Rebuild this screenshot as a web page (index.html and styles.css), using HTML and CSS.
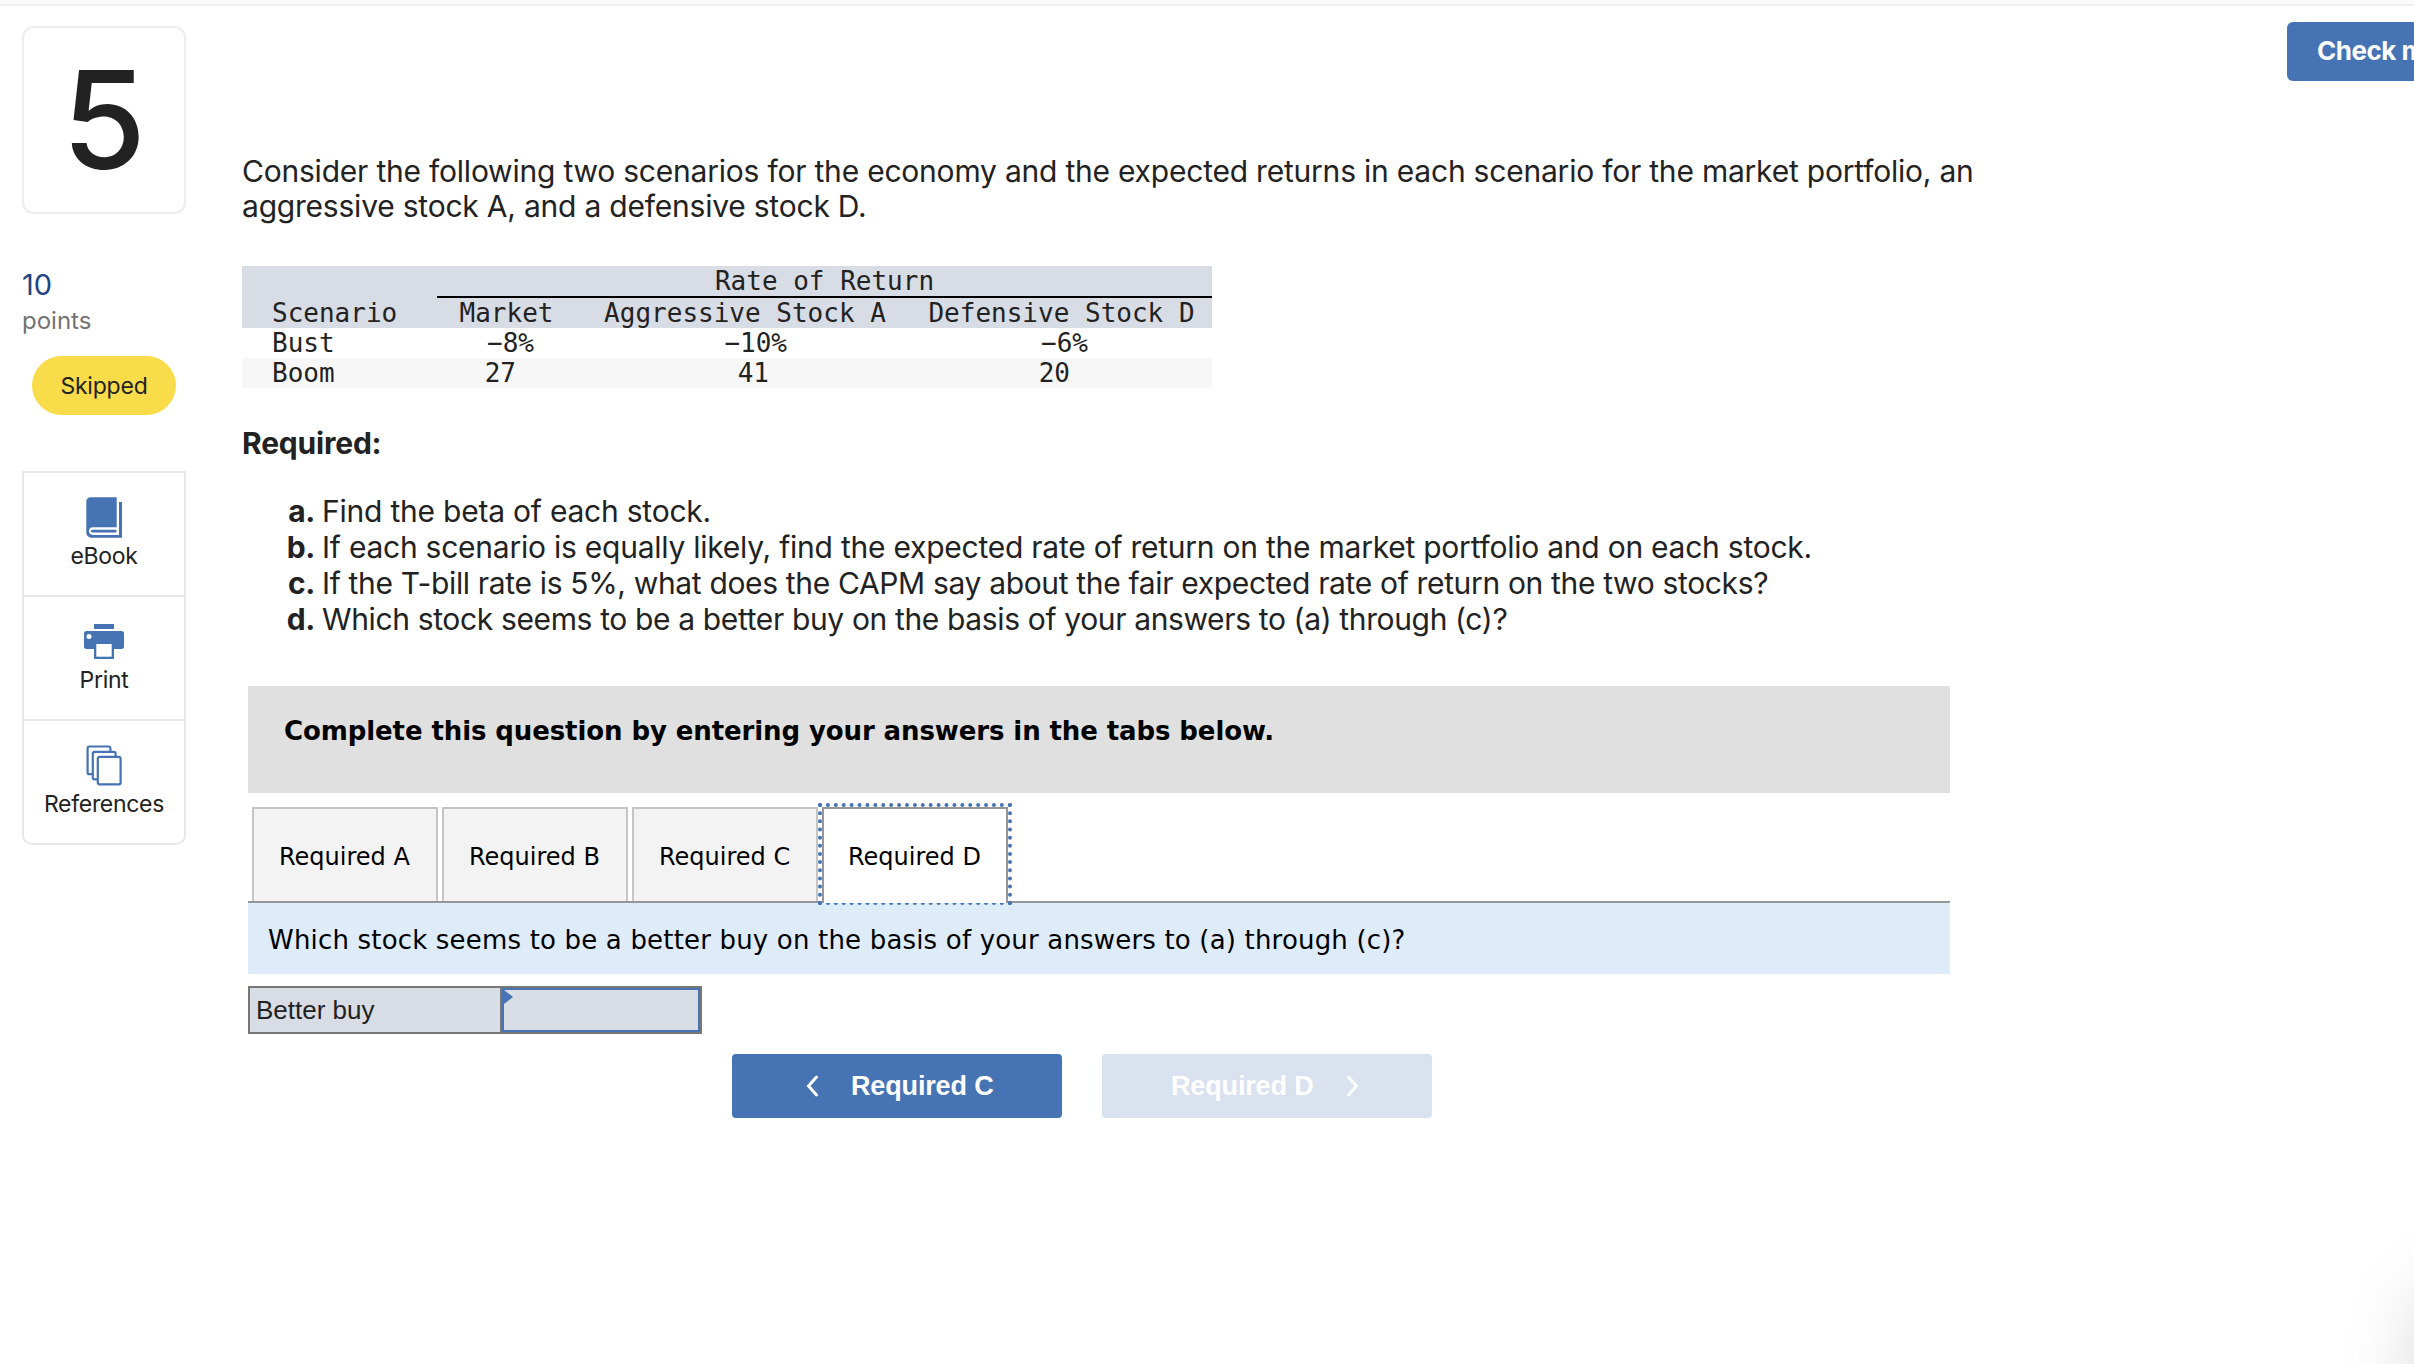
FILE: index.html
```html
<!DOCTYPE html>
<html lang="en">
    <head>
        <meta charset="utf-8">
        <title>Question 5</title>
        <link rel="stylesheet" href="styles.css">
    </head>
    <body>
        <div class="topbar"></div>
        <div class="page">
            <aside class="sidebar">
                <div class="number">5</div>
                <div class="score">10</div>
                <div class="points">points</div>
                <div class="status">Skipped</div>
                <div class="tools">
                    <a class="tool">
                        <svg width="42" height="42" viewBox="0 0 42 42">
                            <path fill="#4673b3" d="M7.5.3H33.7V30.3H9.8a3.8 3.8 0 0 0 0 7.6H36V5h3v35.7H8.3a5 5 0 0 1-5-5V4.5A4.2 4.2 0 0 1 7.5.3z"/>
                            <rect x="8" y="32.7" width="25.7" height="2.7" rx="1.3" fill="#4673b3"/>
                        </svg>
                        <span>eBook</span>
                    </a>
                    <a class="tool">
                        <svg width="42" height="42" viewBox="0 0 42 42">
                            <path fill="#4673b3" d="M11 3h20v5H11zM3.500 10h35a2.500 2.500 0 0 1 2.500 2.500v13a2.500 2.500 0 0 1-2.500 2.500H31v10H11V28H3.500A2.500 2.500 0 0 1 1 25.500v-13A2.500 2.500 0 0 1 3.500 10z"/>
                            <path fill="#fff" d="M13.300 23h15.400v12.700H13.300z"/>
                            <circle cx="6" cy="15.600" r="2.500" fill="#fff"/>
                        </svg>
                        <span>Print</span>
                    </a>
                    <a class="tool">
                        <svg width="42" height="42" viewBox="0 0 42 42">
                            <g fill="#fff" stroke="#4673b3" stroke-width="2.200">
                                <rect x="4.600" y="1.500" width="22.800" height="27.700" rx="1.800"/>
                                <rect x="9.800" y="6.800" width="22.800" height="27.500" rx="1.800"/>
                                <rect x="14.800" y="11.900" width="22.800" height="27.400" rx="1.800"/>
                            </g>
                        </svg>
                        <span>References</span>
                    </a>
                </div>
            </aside>

            <main class="question">
                <p class="intro">Consider the following two scenarios for the economy and the expected returns in each scenario for the market portfolio, an aggressive stock A, and a defensive stock D.</p>

                <table class="returns">
                    <colgroup>
                        <col class="col-scenario"><col class="col-market"><col class="col-a"><col class="col-d">
                    </colgroup>
                    <thead>
                        <tr><th></th><th class="span" colspan="3">Rate of Return</th></tr>
                        <tr><th class="name">Scenario</th><th>Market</th><th>Aggressive Stock A</th><th>Defensive Stock D</th></tr>
                    </thead>
                    <tbody>
                        <tr class="pct"><td class="name">Bust</td><td>−8%</td><td>−10%</td><td>−6%</td></tr>
                        <tr class="alt"><td class="name">Boom</td><td>27</td><td>41</td><td>20</td></tr>
                    </tbody>
                </table>

                <h2 class="required">Required:</h2>
                <ul class="parts">
                    <li><b>a.</b><span class="part-a">Find the beta of each stock.</span></li>
                    <li><b>b.</b><span class="part-b">If each scenario is equally likely, find the expected rate of return on the market portfolio and on each stock.</span></li>
                    <li><b>c.</b><span class="part-c">If the T-bill rate is 5%, what does the CAPM say about the fair expected rate of return on the two stocks?</span></li>
                    <li><b>d.</b><span class="part-d">Which stock seems to be a better buy on the basis of your answers to (a) through (c)?</span></li>
                </ul>

                <section class="worksheet">
                    <div class="directions">Complete this question by entering your answers in the tabs below.</div>
                    <div class="tabs">
                        <div class="tab">Required A</div>
                        <div class="tab">Required B</div>
                        <div class="tab">Required C</div>
                        <div class="tab active">Required D</div>
                    </div>
                    <div class="prompt">Which stock seems to be a better buy on the basis of your answers to (a) through (c)?</div>
                    <div class="answer">
                        <div class="answer-label">Better buy</div>
                        <div class="answer-input"></div>
                    </div>
                    <div class="nav">
                        <div class="btn prev">
                            <svg width="14" height="22" viewBox="0 0 14 22"><path d="M11.500 2L3.500 11l8 9" fill="none" stroke="#fff" stroke-width="3" stroke-linecap="round"/></svg>
                            <span>Required C</span>
                        </div>
                        <div class="btn next">
                            <span>Required D</span>
                            <svg width="14" height="22" viewBox="0 0 14 22"><path d="M2.500 2l8 9-8 9" fill="none" stroke="#fff" stroke-width="3" stroke-linecap="round"/></svg>
                        </div>
                    </div>
                </section>
            </main>

            <div class="check">Check my work</div>
        </div>
        <div class="drawer"></div>
    </body>
</html>
```
FILE: styles.css
```css
* {
    box-sizing: border-box;
}
body {
    margin: 0;
    height: 1364px;
    overflow: hidden;
    background: #fff;
    color: #222;
    font-family: Inter, "Open Sans", sans-serif;
}
.topbar {
    height: 6px;
    background: #fbfbfb;
    border-bottom: 2px solid #efefef;
}
.page {
    display: flex;
    align-items: flex-start;
    overflow: hidden;
    height: 1358px;
}

/* left column */
.sidebar {
    flex: none;
    width: 164px;
    margin: 20px 0 0 22px;
}
.number {
    height: 188px;
    border: 2px solid #ededed;
    border-radius: 12px;
    font-size: 136px;
    font-weight: 500;
    line-height: 184px;
    text-align: center;
}
.score {
    margin-top: 53px;
    color: #1f4584;
    font-size: 29px;
    line-height: 35px;
}
.points {
    color: #737373;
    font-size: 24px;
    line-height: 37px;
}
.status {
    width: 144px;
    height: 59px;
    margin: 17px 0 0 10px;
    border-radius: 30px;
    background: #f8dc4a;
    font-size: 23px;
    line-height: 60px;
    letter-spacing: -0.2px;
    text-align: center;
}
.tools {
    margin-top: 56px;
    border: 2px solid #e8e8e8;
    border-radius: 0 0 10px 10px;
}
.tool {
    display: flex;
    flex-direction: column;
    align-items: center;
    gap: 3px;
    height: 122px;
    padding-top: 24px;
    font-size: 23px;
    line-height: 28px;
    letter-spacing: -0.3px;
}
.tool + .tool {
    height: 124px;
    border-top: 2px solid #e8e8e8;
}

/* question text */
.question {
    flex: none;
    width: 1740px;
    margin: 148px 0 0 56px;
}
.intro {
    margin: 0;
    font-size: 30px;
    line-height: 35px;
    letter-spacing: -0.215px;
}
.returns {
    width: 970px;
    margin-top: 42px;
    border-collapse: separate;
    border-spacing: 0;
    table-layout: fixed;
    font: 26px/30px "DejaVu Sans Mono", monospace;
}
.col-scenario { width: 195px; }
.col-market { width: 139px; }
.col-a { width: 338px; }
.col-d { width: 298px; }
.returns th,
.returns td {
    height: 30px;
    padding: 0;
    font-weight: normal;
}
.returns thead {
    background: #d8dce5;
}
.returns th.span {
    height: 32px;
    border-bottom: 2px solid #000;
}
.returns th:last-child:not(.span) {
    padding-right: 3px;
}
.returns .name {
    padding-left: 30px;
    text-align: left;
}
.returns td {
    text-align: right;
}
.pct td:nth-child(2) { padding-right: 42px; }
.pct td:nth-child(3) { padding-right: 127px; }
.pct td:nth-child(4) { padding-right: 124px; }
.alt td:nth-child(2) { padding-right: 60px; }
.alt td:nth-child(3) { padding-right: 145px; }
.alt td:nth-child(4) { padding-right: 142px; }
.alt {
    background: #f7f7f7;
}
.required {
    margin: 37px 0 0;
    font-size: 30px;
    line-height: 36px;
    letter-spacing: -0.2px;
}
.parts {
    margin: 32px 0 0;
    padding: 0;
    list-style: none;
    font-size: 30px;
    line-height: 36px;
}
.parts li {
    display: flex;
    gap: 7px;
    white-space: nowrap;
}
.parts b {
    width: 73px;
    letter-spacing: -0.3px;
    text-align: right;
}
.part-a { letter-spacing: -0.22px; }
.part-b { letter-spacing: -0.24px; }
.part-c { letter-spacing: -0.34px; }
.part-d { letter-spacing: -0.36px; }

/* worksheet */
.worksheet {
    width: 1702px;
    margin: 49px 0 0 6px;
    color: #000;
    font-family: "DejaVu Sans", Verdana, sans-serif;
}
.directions {
    height: 107px;
    padding: 30px 36px 0;
    background: #e0e0e0;
    font-size: 26px;
    font-weight: bold;
    line-height: 30px;
    letter-spacing: -0.1px;
}
.tabs {
    display: flex;
    gap: 4px;
    height: 110px;
    padding: 14px 0 0 4px;
    border-bottom: 2px solid #969696;
}
.tab {
    width: 186px;
    height: 94px;
    padding-left: 25px;
    border: 2px solid #c5c5c5;
    border-bottom: 0;
    background: #f3f3f3;
    font-size: 24px;
    line-height: 96px;
}
.tab.active {
    position: relative;
    padding-left: 24px;
    border-color: #969696;
    background: #fff;
    outline: 4px dotted #4673b3;
}
/* hides the bar line under the open tab */
.tab.active::after {
    content: "";
    position: absolute;
    z-index: 1;
    left: 0;
    right: 0;
    bottom: -2px;
    height: 2px;
    background: #fff;
}
.prompt {
    height: 71px;
    padding: 22px 20px 0;
    background: #deebf9;
    font-size: 26px;
    line-height: 30px;
    letter-spacing: 0.18px;
}
.answer {
    display: flex;
    width: 454px;
    height: 48px;
    margin-top: 12px;
    border: 2px solid #777;
    background: #d8dce5;
    color: #222;
    font: 26px/44px "Liberation Sans", Arial, sans-serif;
}
.answer-label {
    width: 252px;
    padding-left: 6px;
    border-right: 2px solid #777;
}
.answer-input {
    flex: 1;
    border: 2px solid #4673b3;
}
.answer-input::before {
    content: "";
    display: block;
    width: 0;
    border: 7px solid transparent;
    border-left: 9px solid #4673b3;
    border-right: 0;
}
.nav {
    display: flex;
    gap: 40px;
    margin: 20px 0 0 484px;
}
.btn {
    display: flex;
    align-items: center;
    gap: 32px;
    width: 330px;
    height: 64px;
    border-radius: 4px;
    background: #4673b3;
    color: #fff;
    font: bold 27px/64px "Liberation Sans", Arial, sans-serif;
    letter-spacing: -0.15px;
}
.prev { padding-left: 73px; }
.next {
    padding-left: 69px;
    background: #d9e2ee;
}
.check {
    flex: none;
    width: 240px;
    height: 59px;
    margin: 16px 0 0 305px;
    padding-left: 30px;
    border-radius: 6px;
    background: #4673b3;
    color: #fff;
    font-size: 26px;
    font-weight: bold;
    line-height: 57px;
    letter-spacing: -0.5px;
    white-space: nowrap;
}
/* edge of the panel parked off the right side */
.drawer {
    position: fixed;
    left: 2422px;
    top: 1290px;
    width: 200px;
    height: 300px;
    border-radius: 40px;
    box-shadow: 0 0 80px rgba(0, 0, 0, 0.18);
}
```
